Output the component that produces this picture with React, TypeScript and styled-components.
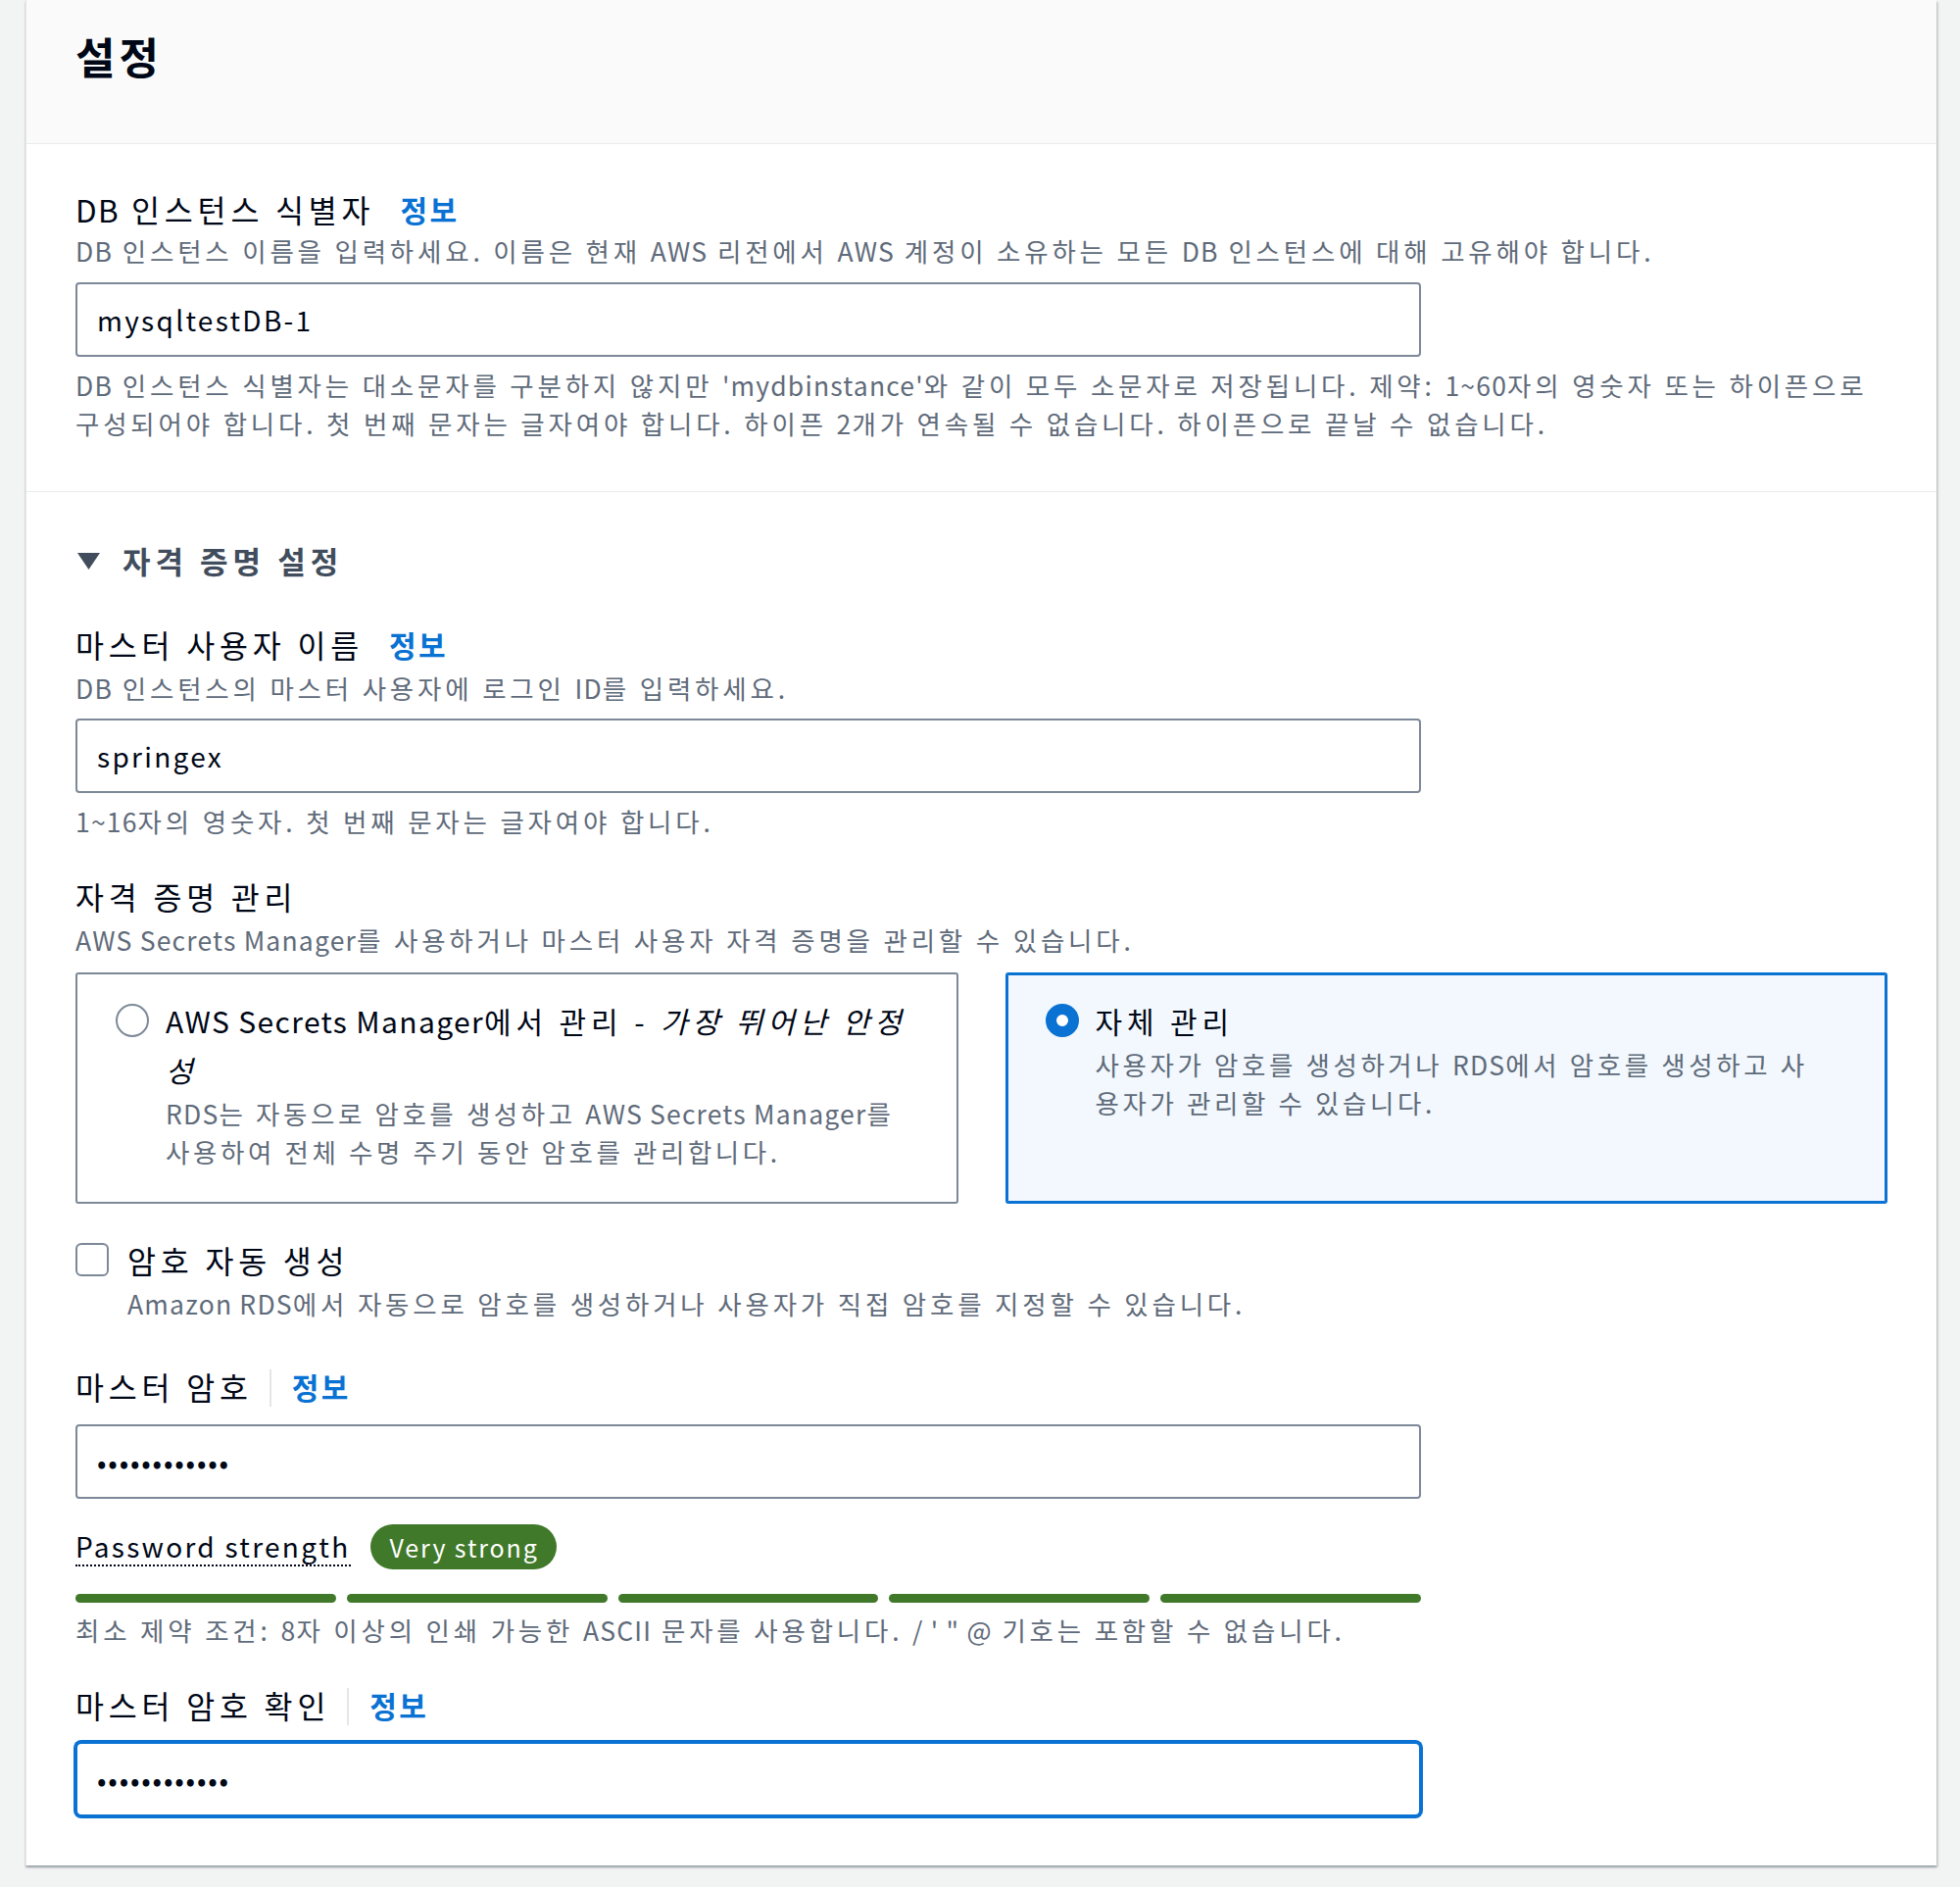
import React from "react";
import styled, { createGlobalStyle } from "styled-components";

const SANS = `"Noto Sans CJK KR", "Noto Sans", sans-serif`;

const GlobalStyle = createGlobalStyle`
  html, body {
    margin: 0;
    padding: 0;
    background: #f2f3f3;
  }
  body {
    font-family: ${SANS};
    color: #000716;
  }
  * { box-sizing: border-box; }
`;

const Page = styled.div`
  padding: 0 24px 21px 26px;
`;

const Card = styled.section`
  background: #ffffff;
  border-left: 1px solid #e4e7ea;
  box-shadow: 0 2px 2px 0 rgba(0, 28, 36, 0.3), 2px 2px 2px 0 rgba(0, 28, 36, 0.12);
`;

const CardHeader = styled.header`
  height: 147px;
  padding: 33px 50px 0;
  background: #fafafa;
  border-bottom: 1px solid #e9ebed;
`;

const Title = styled.h2`
  margin: 0;
  font-size: 44px;
  line-height: 48px;
  font-weight: 700;
  letter-spacing: 4px;
  color: #000716;
`;

/* Latin words and digits inside Korean text sit tighter than the Hangul around them */
const Latin = styled.span`
  letter-spacing: 0.045em;
`;

const Section = styled.div<{ $pt: number; $pb: number; $divider?: boolean }>`
  padding: ${(p) => p.$pt}px 50px ${(p) => p.$pb}px;
  border-bottom: ${(p) => (p.$divider ? "1px solid #e9ebed" : "none")};
`;

const Field = styled.div<{ $mt?: number }>`
  margin-top: ${(p) => p.$mt ?? 0}px;
`;

const Label = styled.div`
  display: flex;
  align-items: center;
  font-size: 31.5px;
  line-height: 44px;
  letter-spacing: 4.8px;
  color: #000716;
`;

const InfoLink = styled.a<{ $gap?: number }>`
  margin-left: ${(p) => p.$gap ?? 0}px;
  font-size: 30px;
  font-weight: 700;
  letter-spacing: 2.5px;
  color: #0972d3;
  text-decoration: none;
  cursor: pointer;
`;

const Separator = styled.span`
  width: 2px;
  height: 38px;
  margin: 4px 21px 0 17px;
  background: #e3e6e9;
`;

const Description = styled.div<{ $mt?: number }>`
  margin-top: ${(p) => p.$mt ?? 0}px;
  font-size: 26.5px;
  line-height: 42px;
  letter-spacing: 3.8px;
  color: #5f6b7a;
`;

const Constraint = styled.div<{ $mt?: number }>`
  margin-top: ${(p) => p.$mt ?? 9}px;
  font-size: 26.5px;
  line-height: 39px;
  letter-spacing: 3.8px;
  color: #5f6b7a;
`;

const TextInput = styled.input<{ $focused?: boolean; $mt?: number; $secret?: boolean }>`
  display: block;
  width: 100%;
  max-width: 1373px;
  height: 76px;
  margin-top: ${(p) => p.$mt ?? 10}px;
  padding: 0 20px;
  border: 2px solid ${(p) => (p.$focused ? "#0972d3" : "#7d8998")};
  box-shadow: ${(p) => (p.$focused ? "0 0 0 2px #0972d3" : "none")};
  border-radius: ${(p) => (p.$focused ? 6 : 4)}px;
  background: #ffffff;
  font-family: ${SANS};
  font-size: 28px;
  letter-spacing: ${(p) => (p.$secret ? 1.8 : 2.3)}px;
  color: #000716;
  outline: none;
`;

const ExpandHeader = styled.div`
  display: flex;
  align-items: center;
  gap: 23px;
  padding-left: 2px;
  font-size: 31px;
  line-height: 44px;
  font-weight: 700;
  letter-spacing: 5px;
  color: #414d5c;
`;

const Tiles = styled.div`
  display: grid;
  grid-template-columns: 1fr 1fr;
  gap: 48px;
  margin-top: 12px;
`;

const Tile = styled.label<{ $selected?: boolean }>`
  display: flex;
  align-items: flex-start;
  gap: 17px;
  padding: 22px 34px 32px 39px;
  border: 2px solid ${(p) => (p.$selected ? "#0972d3" : "#7d8998")};
  box-shadow: ${(p) => (p.$selected ? "inset 0 0 0 1px #0972d3" : "none")};
  border-radius: 3px;
  background: ${(p) => (p.$selected ? "#f2f8fd" : "#ffffff")};
`;

const Radio = styled.span<{ $checked?: boolean }>`
  flex: none;
  width: 34px;
  height: 34px;
  margin-top: 8px;
  border-radius: 50%;
  border: ${(p) => (p.$checked ? "11px solid #0972d3" : "2px solid #7d8998")};
  background: #ffffff;
`;

const TileBody = styled.div`
  flex: 1;
  min-width: 0;
`;

const TileTitle = styled.div`
  font-size: 30px;
  line-height: 50px;
  letter-spacing: 4.9px;
  color: #000716;
`;

const TileDesc = styled.div`
  max-width: 744px;
  font-size: 26.5px;
  line-height: 39px;
  letter-spacing: 3.6px;
  color: #5f6b7a;
`;

const CheckRow = styled.label`
  display: flex;
  align-items: center;
  gap: 19px;
  margin-top: 35px;
  font-size: 31.5px;
  line-height: 44px;
  letter-spacing: 4.8px;
  color: #000716;
`;

const CheckBox = styled.span`
  flex: none;
  width: 34px;
  height: 34px;
  border: 2px solid #7d8998;
  border-radius: 6px;
  background: #ffffff;
`;

const CheckDesc = styled(Description)`
  padding-left: 53px;
`;

const StrengthRow = styled.div`
  display: flex;
  align-items: center;
  gap: 20px;
  margin-top: 24px;
  height: 50px;
`;

const StrengthLabel = styled.span`
  font-size: 28px;
  line-height: 38px;
  letter-spacing: 2.3px;
  color: #000716;
  border-bottom: 2px dotted #000716;
`;

const Badge = styled.span`
  display: inline-flex;
  align-items: center;
  height: 46px;
  padding: 0 18px 0 20px;
  border-radius: 23px;
  background: #41792a;
  color: #ffffff;
  font-size: 25px;
  letter-spacing: 1.9px;
`;

const Meter = styled.div`
  display: flex;
  gap: 11px;
  max-width: 1373px;
  margin-top: 23px;
`;

const MeterSegment = styled.span`
  flex: 1;
  height: 9px;
  border-radius: 5px;
  background: #41792a;
`;

function FieldLabel({ children, sep }: { children: React.ReactNode; sep?: boolean }) {
  return (
    <Label>
      <span>{children}</span>
      {sep && <Separator />}
      <InfoLink $gap={sep ? 0 : 26}>정보</InfoLink>
    </Label>
  );
}

export default function App() {
  return (
    <>
      <GlobalStyle />
      <Page>
        <Card>
          <CardHeader>
            <Title>설정</Title>
          </CardHeader>

          <Section $pt={44} $pb={50} $divider>
            <Field>
              <FieldLabel>
                <Latin>DB</Latin> 인스턴스 식별자
              </FieldLabel>
              <Description>
                <Latin>DB</Latin> 인스턴스 이름을 입력하세요. 이름은 현재 <Latin>AWS</Latin> 리전에서{" "}
                <Latin>AWS</Latin> 계정이 소유하는 모든 <Latin>DB</Latin> 인스턴스에 대해 고유해야 합니다.
              </Description>
              <TextInput type="text" readOnly value="mysqltestDB-1" $mt={11} />
              <Constraint>
                <Latin>DB</Latin> 인스턴스 식별자는 대소문자를 구분하지 않지만 <Latin>'mydbinstance'</Latin>와 같이 모두
                소문자로 저장됩니다. 제약: <Latin>1~60</Latin>자의 영숫자 또는 하이픈으로 구성되어야 합니다. 첫 번째
                문자는 글자여야 합니다. 하이픈 <Latin>2</Latin>개가 연속될 수 없습니다. 하이픈으로 끝날 수 없습니다.
              </Constraint>
            </Field>
          </Section>

          <Section $pt={48} $pb={50}>
            <ExpandHeader>
              <svg width="23" height="17" viewBox="0 0 23 17" aria-hidden="true">
                <polygon points="0,0 23,0 11.5,17" fill="#414d5c" />
              </svg>
              <span>자격 증명 설정</span>
            </ExpandHeader>

            <Field $mt={41}>
              <FieldLabel>마스터 사용자 이름</FieldLabel>
              <Description $mt={2}>
                <Latin>DB</Latin> 인스턴스의 마스터 사용자에 로그인 <Latin>ID</Latin>를 입력하세요.
              </Description>
              <TextInput type="text" readOnly value="springex" />
              <Constraint>
                <Latin>1~16</Latin>자의 영숫자. 첫 번째 문자는 글자여야 합니다.
              </Constraint>
            </Field>

            <Field $mt={35}>
              <Label>자격 증명 관리</Label>
              <Description $mt={2}>
                <Latin>AWS Secrets Manager</Latin>를 사용하거나 마스터 사용자 자격 증명을 관리할 수 있습니다.
              </Description>
              <Tiles>
                <Tile>
                  <Radio />
                  <TileBody>
                    <TileTitle>
                      <Latin>AWS Secrets Manager</Latin>에서 관리 - <i>가장 뛰어난 안정성</i>
                    </TileTitle>
                    <TileDesc>
                      <Latin>RDS</Latin>는 자동으로 암호를 생성하고 <Latin>AWS Secrets Manager</Latin>를 사용하여 전체
                      수명 주기 동안 암호를 관리합니다.
                    </TileDesc>
                  </TileBody>
                </Tile>
                <Tile $selected>
                  <Radio $checked />
                  <TileBody>
                    <TileTitle>자체 관리</TileTitle>
                    <TileDesc>
                      사용자가 암호를 생성하거나 <Latin>RDS</Latin>에서 암호를 생성하고 사용자가 관리할 수 있습니다.
                    </TileDesc>
                  </TileBody>
                </Tile>
              </Tiles>
            </Field>

            <CheckRow>
              <CheckBox />
              <span>암호 자동 생성</span>
            </CheckRow>
            <CheckDesc $mt={2}>
              <Latin>Amazon RDS</Latin>에서 자동으로 암호를 생성하거나 사용자가 직접 암호를 지정할 수 있습니다.
            </CheckDesc>

            <Field $mt={41}>
              <FieldLabel sep>마스터 암호</FieldLabel>
              <TextInput type="password" readOnly value="springex1234" $mt={17} $secret />
              <StrengthRow>
                <StrengthLabel>Password strength</StrengthLabel>
                <Badge>Very strong</Badge>
              </StrengthRow>
              <Meter>
                <MeterSegment />
                <MeterSegment />
                <MeterSegment />
                <MeterSegment />
                <MeterSegment />
              </Meter>
              <Constraint $mt={8}>
                최소 제약 조건: <Latin>8</Latin>자 이상의 인쇄 가능한 <Latin>ASCII</Latin> 문자를 사용합니다.{" "}
                <Latin>/ ' " @</Latin> 기호는 포함할 수 없습니다.
              </Constraint>
            </Field>

            <Field $mt={35}>
              <FieldLabel sep>마스터 암호 확인</FieldLabel>
              <TextInput type="password" readOnly value="springex1234" $focused $mt={16} $secret />
            </Field>
          </Section>
        </Card>
      </Page>
    </>
  );
}
